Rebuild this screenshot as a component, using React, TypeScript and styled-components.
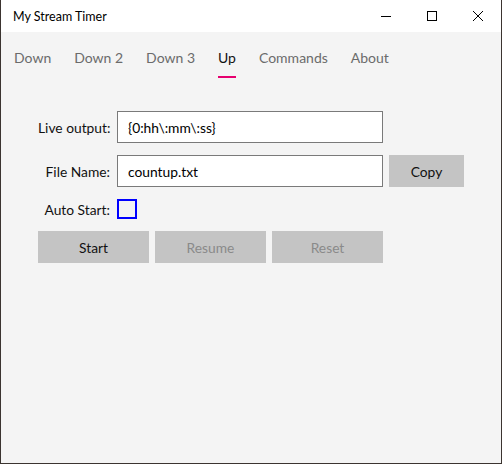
import React, { useState } from "react";
import styled, { createGlobalStyle } from "styled-components";

const GlobalStyle = createGlobalStyle`
	html, body {
		margin: 0;
		padding: 0;
		background: #f4f4f4;
	}
	* {
		box-sizing: border-box;
	}
`;

const FONT = `"Lato", "Noto Sans", sans-serif`;

const tabs = ["Down", "Down 2", "Down 3", "Up", "Commands", "About"];

function App() {
	const [active, setActive] = useState<string>("Up");
	const [output, setOutput] = useState<string>("{0:hh\\:mm\\:ss}");
	const [fileName, setFileName] = useState<string>("countup.txt");
	const [autoStart, setAutoStart] = useState<boolean>(false);

	return (
		<Window>
			<GlobalStyle />
			{/* Title bar */}
			<TitleBar>
				<Title>My Stream Timer</Title>
				<Controls>
					<ControlButton aria-label="Minimize">
						<svg width="10" height="10" viewBox="0 0 10 10">
							<path d="M0 5.5 H10" stroke="#000" strokeWidth="1" />
						</svg>
					</ControlButton>
					<ControlButton aria-label="Maximize">
						<svg width="10" height="10" viewBox="0 0 10 10">
							<rect x="0.5" y="0.5" width="9" height="9" fill="none" stroke="#000" strokeWidth="1" />
						</svg>
					</ControlButton>
					<ControlButton aria-label="Close">
						<svg width="10" height="10" viewBox="0 0 10 10">
							<path d="M0 0 L10 10 M10 0 L0 10" stroke="#000" strokeWidth="1" />
						</svg>
					</ControlButton>
				</Controls>
			</TitleBar>

			{/* Tabs */}
			<TabBar>
				{tabs.map((tab) => (
					<Tab key={tab} $active={tab === active} onClick={() => setActive(tab)}>
						{tab}
					</Tab>
				))}
			</TabBar>

			{/* Form */}
			<Form>
				<Row>
					<Label>Live output:</Label>
					<TextBox value={output} onChange={(e) => setOutput(e.target.value)} />
				</Row>
				<Row>
					<Label>File Name:</Label>
					<TextBox value={fileName} onChange={(e) => setFileName(e.target.value)} />
					<CopyButton $width={75}>Copy</CopyButton>
				</Row>
				<CheckRow>
					<Label>Auto Start:</Label>
					<CheckBox $checked={autoStart} onClick={() => setAutoStart(!autoStart)} />
				</CheckRow>
				<Buttons>
					<GrayButton $width={111}>Start</GrayButton>
					<GrayButton $width={111} disabled>Resume</GrayButton>
					<GrayButton $width={111} disabled>Reset</GrayButton>
				</Buttons>
			</Form>
		</Window>
	);
}

const Window = styled.div`
	width: 502px;
	height: 464px;
	background: #f4f4f4;
	border: 1px solid #3b3430;
	border-top: none;
	font-family: ${FONT};
	display: flex;
	flex-direction: column;
	overflow: hidden;
`;

const TitleBar = styled.div`
	height: 32px;
	background: #ffffff;
	display: flex;
	align-items: center;
	justify-content: space-between;
	padding-left: 12px;
`;

const Title = styled.div`
	font-size: 12.5px;
	color: #000;
`;

const Controls = styled.div`
	display: flex;
	height: 100%;
`;

const ControlButton = styled.div`
	width: 46px;
	height: 100%;
	display: flex;
	align-items: center;
	justify-content: center;
`;

const TabBar = styled.div`
	display: flex;
	gap: 23px;
	padding: 0 0 0 13px;
	height: 52px;
`;

const Tab = styled.div<{ $active: boolean }>`
	position: relative;
	font-size: 14px;
	color: ${(p) => (p.$active ? "#111" : "#6b6b6b")};
	padding-top: 17px;
	white-space: nowrap;
	cursor: pointer;

	&::after {
		content: "";
		display: ${(p) => (p.$active ? "block" : "none")};
		position: absolute;
		left: 0;
		right: 0;
		top: 44px;
		height: 2px;
		background: #e6006f;
	}
`;

const Form = styled.div`
	display: flex;
	flex-direction: column;
	padding: 27px 0 0 37px;
	gap: 12px;
`;

const Row = styled.div`
	display: flex;
	align-items: center;
`;

const CheckRow = styled(Row)`
	height: 20px;
`;

const Label = styled.div`
	width: 79px;
	padding-right: 7px;
	text-align: right;
	white-space: nowrap;
	font-size: 13.8px;
	color: #111;
`;

const TextBox = styled.input`
	width: 266px;
	height: 32px;
	border: 1px solid #7a7a7a;
	background: #fff;
	font-family: ${FONT};
	font-size: 13.8px;
	padding: 0 10px;
	color: #000;
	outline: none;
`;

const CheckBox = styled.div<{ $checked: boolean }>`
	width: 20px;
	height: 20px;
	border: 2px solid #0000ff;
	background: ${(p) => (p.$checked ? "#0000ff" : "transparent")};
	cursor: pointer;
`;

const Buttons = styled.div`
	display: flex;
	gap: 6px;
`;

const GrayButton = styled.button<{ $width: number }>`
	width: ${(p) => p.$width}px;
	height: 32px;
	border: none;
	background: #c4c4c4;
	font-family: ${FONT};
	font-size: 13.8px;
	color: #111;
	padding: 0;

	&:disabled {
		color: #8a8a8a;
	}
`;

const CopyButton = styled(GrayButton)`
	margin-left: 6px;
`;

export default App;
